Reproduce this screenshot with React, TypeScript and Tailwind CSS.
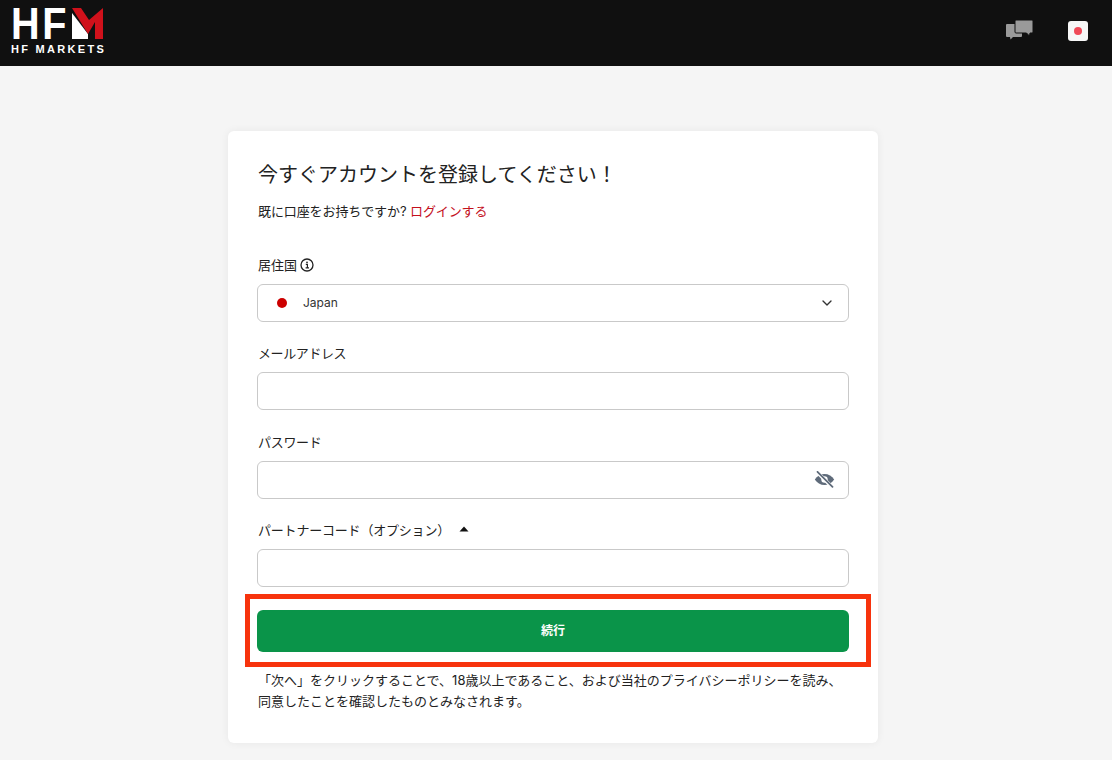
import React from 'react'
import { ChevronDown } from 'lucide-react'

const fontStack = "font-['Inter','Noto_Sans_CJK_JP',sans-serif]"

// HFM logo: letters are real text, the M mark is a drawing
const Logo: React.FC = () => (
	<div className="flex flex-col mb-[5px]">
		<div className="flex items-center h-[31px]">
			<span className="font-['Liberation_Sans',sans-serif] font-bold text-white text-[44px] leading-[31px] tracking-[3px] scale-x-90 origin-left w-[61px] whitespace-nowrap">
				HF
			</span>
			<svg width="32" height="31" viewBox="0 0 32 31">
				<path d="M0 5 L16 26 L16 31 L0 31 Z" fill="#ffffff" />
				<path d="M0 0 L9 0 L17 12 L31 0 L31 31 L23 31 L23 14 L16 26 Z" fill="#d0111b" />
			</svg>
		</div>
		<span className="font-['Liberation_Sans',sans-serif] font-bold text-white text-[11px] leading-[10px] tracking-[2.3px] mt-[5px] whitespace-nowrap">
			HF MARKETS
		</span>
	</div>
)

const ChatIcon: React.FC = () => (
	<svg width="27" height="20" viewBox="0 0 27 20" className="mb-[6px]">
		<path d="M1 4 H15 Q16 4 16 5 V16 Q16 17 15 17 H7 L4.500 19.500 L4 17 H1 Q0 17 0 16 V5 Q0 4 1 4 Z" fill="#9a9a9a" />
		<path d="M10 0 H26 Q27 0 27 1 V12 Q27 13 26 13 H24 L23.500 16 L20.500 13 H10 Q9 13 9 12 V1 Q9 0 10 0 Z" fill="#9a9a9a" stroke="#101010" strokeWidth="1" />
	</svg>
)

const EyeOffIcon: React.FC = () => (
	<svg width="21" height="17" viewBox="0 0 21 17" fill="none">
		<path d="M0.800 8.500 C3 5 6.500 3 10.500 3 C14.500 3 18 5 20.200 8.500 C18 12 14.500 14 10.500 14 C6.500 14 3 12 0.800 8.500 Z" fill="#5f6b7a" />
		<circle cx="10.500" cy="8.500" r="3.200" fill="#ffffff" />
		<path d="M3 1 L18 16" stroke="#ffffff" strokeWidth="3.500" />
		<path d="M3.500 0.800 L18.500 15.800" stroke="#5f6b7a" strokeWidth="1.800" strokeLinecap="round" />
	</svg>
)

const Field: React.FC<{ label: React.ReactNode; children?: React.ReactNode }> = ({ label, children }) => (
	<div className="flex flex-col">
		<div className="h-[16px] flex items-center text-[13px] leading-[16px] text-[#222222]">{label}</div>
		<div className="mt-[11px] h-[38px] rounded-[6px] border border-[#c9c9c9] bg-white flex items-center">
			{children}
		</div>
	</div>
)

const App: React.FC = () => {
	return (
		<div className={`h-[760px] overflow-hidden bg-[#f5f5f5] ${fontStack}`}>
			<header className="h-[66px] bg-[#101010] flex items-center justify-between pl-[11px] pr-[24px]">
				<Logo />
				<div className="flex items-center gap-[35px]">
					<ChatIcon />
					<div className="w-5 h-5 rounded-[3px] bg-[#f7f7f7] flex items-center justify-center mb-[4px]">
						<span className="w-2 h-2 rounded-full bg-[#f04a58]" />
					</div>
				</div>
			</header>

			<main className="flex justify-center pt-[65px] pr-[6px]">
				<div className="relative w-[650px] h-[612px] bg-white rounded-[6px] shadow-[0_0_8px_rgba(0,0,0,0.06)] px-[29px] pt-[30px]">
					<h1 className="pl-px text-[20px] leading-[28px] text-[#222222] font-normal">
						今すぐアカウントを登録してください！
					</h1>
					<p className="pl-px mt-[13px] text-[13px] leading-[18px] tracking-[-0.1px] text-[#222222]">
						既に口座をお持ちですか? <span className="text-[#c4101c]">ログインする</span>
					</p>

					<div className="mt-[37px] flex flex-col gap-[23.33px]">
						<Field
							label={
								<span className="pl-px flex items-center gap-[3px]">
									居住国
									<svg width="14" height="14" viewBox="0 0 14 14" fill="none">
										<circle cx="7" cy="7" r="6" stroke="#222222" strokeWidth="1.300" />
										<circle cx="7" cy="4.300" r="0.900" fill="#222222" />
										<path d="M5.800 6.300 H7.400 V9.800 M5.600 9.900 H9" stroke="#222222" strokeWidth="1.200" />
									</svg>
								</span>
							}
						>
							<span className="ml-[19px] w-[10px] h-[10px] rounded-full bg-[#cc0000]" />
							<span className="ml-[16px] text-[12px] text-[#333333]">Japan</span>
							<ChevronDown className="ml-auto mr-[13px] text-[#333333]" size={16} strokeWidth={2} />
						</Field>
						<Field label={<span className="pl-px tracking-[-0.4px]">メールアドレス</span>} />
						<Field label={<span className="pl-px tracking-[-0.3px]">パスワード</span>}>
							<div className="ml-auto mr-[13px] flex">
								<EyeOffIcon />
							</div>
						</Field>
						<Field
							label={
								<span className="pl-px flex items-center tracking-[-0.2px]">
									パートナーコード（オプション）
									<svg width="10" height="6" viewBox="0 0 10 6" className="ml-[9px] mb-[2px]">
										<path d="M5 0.500 L9.500 5.500 L0.500 5.500 Z" fill="#111111" />
									</svg>
								</span>
							}
						/>
					</div>

					<button className="mt-[23px] w-full h-[42px] rounded-[6px] bg-[#0a9449] text-white text-[12px] font-bold">
						続行
					</button>

					<p className="pl-px mt-[18.5px] text-[13px] leading-[21px] text-[#222222]">
						「次へ」をクリックすることで、18歳以上であること、および当社のプライバシーポリシーを読み、
						<br />
						同意したことを確認したものとみなされます。
					</p>

					{/* 赤枠の注釈 */}
					<div className="absolute left-[17px] top-[463px] w-[626px] h-[73px] border-[5px] border-[#f7330d] pointer-events-none" />
				</div>
			</main>
		</div>
	)
}

export default App
